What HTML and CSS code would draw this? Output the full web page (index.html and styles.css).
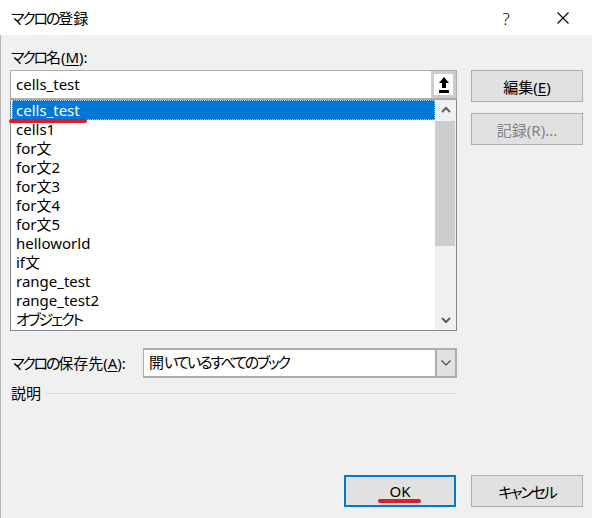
FILE: index.html
```html
<!DOCTYPE html>
<html lang="ja">
<head>
<meta charset="utf-8">
<title>マクロの登録</title>
<link rel="stylesheet" href="styles.css">
</head>
<body>
<div class="window">
  <div class="titlebar">
    <div class="title"><span class="kana">マクロの</span>登録</div>
    <div class="cap-btn help">?</div>
    <div class="cap-btn close">
      <svg width="12" height="12" viewBox="0 0 12 12"><path d="M0.5 0.5 L11.5 11.5 M11.5 0.5 L0.5 11.5" stroke="#000" stroke-width="1.1" fill="none"/></svg>
    </div>
  </div>
  <div class="content">
    <div class="main">
      <div class="left">
        <div class="field-label"><span class="kana">マクロ</span>名(<u>M</u>):</div>
        <div class="name-input">
          <span class="input-text">cells_test</span>
          <span class="ref-btn">
            <svg width="10" height="16" viewBox="0 0 10 16"><path d="M5 0 L10 6 H7 V11 H3 V6 H0 Z" fill="#000"/><rect x="0" y="13" width="10" height="3" fill="#000"/></svg>
          </span>
        </div>
        <div class="list">
          <div class="items">
            <div class="row selected">cells_test</div>
            <div class="row">cells1</div>
            <div class="row">for文</div>
            <div class="row">for文2</div>
            <div class="row">for文3</div>
            <div class="row">for文4</div>
            <div class="row">for文5</div>
            <div class="row">helloworld</div>
            <div class="row">if文</div>
            <div class="row">range_test</div>
            <div class="row">range_test2</div>
            <div class="row"><span class="kana">オブジェクト</span></div>
          </div>
          <div class="scrollbar">
            <div class="sb-btn sb-up"><svg width="10" height="7" viewBox="0 0 10 7"><polyline points="1,6 5,2 9,6" stroke="#606060" stroke-width="2" fill="none"/></svg></div>
            <div class="sb-thumb"></div>
            <div class="sb-track"></div>
            <div class="sb-btn sb-down"><svg width="10" height="7" viewBox="0 0 10 7"><polyline points="1,1 5,5 9,1" stroke="#606060" stroke-width="2" fill="none"/></svg></div>
          </div>
          <div class="mark mark-list"></div>
        </div>
        <div class="save-row">
          <div class="save-label"><span class="kana">マクロの</span>保存先(<u>A</u>):</div>
          <div class="combo">
            <span class="combo-text">開<span class="kana">いているすべてのブック</span></span>
            <span class="combo-btn"><svg width="10" height="6" viewBox="0 0 10 6"><polyline points="0.5,0.5 5,5 9.5,0.5" stroke="#404040" stroke-width="1.1" fill="none"/></svg></span>
          </div>
        </div>
        <div class="desc-row">
          <span class="desc-label">説明</span>
          <span class="desc-line"></span>
        </div>
      </div>
      <div class="right">
        <button class="btn edit">編集(<u>E</u>)</button>
        <button class="btn record" disabled>記録(R)...</button>
      </div>
    </div>
    <div class="footer">
      <button class="btn ok">OK<span class="mark mark-ok"></span></button>
      <button class="btn"><span class="kana">キャンセル</span></button>
    </div>
  </div>
</div>
</body>
</html>
```
FILE: styles.css
```css
* { box-sizing: border-box; }
html, body { margin: 0; padding: 0; }
body {
  width: 592px;
  height: 518px;
  overflow: hidden;
  font-family: "Noto Sans", "Noto Sans CJK JP", sans-serif;
  font-feature-settings: "palt";
  font-size: 15px;
  font-weight: 400;
  color: #000;
  background: #f0f0f0;
}
u { text-decoration: underline; text-underline-offset: 2px; text-decoration-thickness: 1px; }
.kana { letter-spacing: -2.2px; }

.window { width: 592px; height: 518px; display: flex; flex-direction: column; }

.titlebar {
  height: 35px;
  background: #fff;
  display: flex;
  align-items: center;
  padding-left: 11px;
  padding-right: 6px;
}
.title { flex: 1; font-size: 15px; line-height: 20px; }
.cap-btn { width: 46px; height: 35px; display: flex; align-items: center; justify-content: center; }
.help { font-size: 17px; font-weight: 300; margin-right: 11px; padding-top: 1px; }
.close { padding-top: 1px; }

.content {
  height: 483px;
  background: #f0f0f0;
  border-left: 1px solid #b4b4b4;
  padding: 12px 9px 11px 9px;
  display: flex;
  flex-direction: column;
}
.main {
  display: grid;
  grid-template-columns: 447px 112px;
  column-gap: 14px;
}
.left { display: flex; flex-direction: column; }
.field-label { height: 20px; line-height: 20px; margin-bottom: 3px; padding-left: 1px; }

.name-input {
  height: 29px;
  border: 1px solid #adadad;
  background: #fff;
  display: flex;
  align-items: stretch;
}
.input-text { flex: 1; padding-left: 5px; line-height: 26px; }
.ref-btn {
  width: 25px;
  background: #fff;
  border: 3px solid #cccccc;
  display: flex;
  align-items: center;
  justify-content: center;
}

.list {
  position: relative;
  height: 232px;
  border: 1px solid #828790;
  border-top-color: #adadad;
  background: #fff;
  display: flex;
}
.items { flex: 1; padding: 0 0 0 1px; }
.row { height: 19px; line-height: 19px; padding-left: 4px; white-space: nowrap; }
.row.selected {
  height: 20px;
  line-height: 20px;
  background: #0078d7;
  color: #fff;
  outline: 1px dotted #9fcdf2;
  outline-offset: -1px;
}
.scrollbar { width: 21px; background: #f0f0f0; display: flex; flex-direction: column; }
.sb-btn { height: 21px; display: flex; align-items: center; justify-content: center; }
.sb-up { padding-bottom: 2px; }
.sb-down { height: 20px; padding-top: 0; }
.sb-thumb { height: 125px; background: #cdcdcd; margin: 0 1px 0 0; }
.sb-track { flex: 1; }

.mark { position: absolute; background: #e31b23; border-radius: 2px; height: 4px; }
.mark-list { left: -2px; top: 19px; width: 78px; }

.save-row { margin-top: 17px; display: flex; align-items: center; }
.save-label { width: 133px; padding-left: 1px; line-height: 20px; }
.combo {
  width: 314px;
  height: 30px;
  border: 1px solid #adadad;
  border-top-width: 2px;
  border-bottom-width: 2px;
  background: #fff;
  display: flex;
  align-items: stretch;
}
.combo-text { flex: 1; padding-left: 5px; line-height: 25px; }
.combo-btn {
  width: 21px;
  background: #e1e1e1;
  border-left: 2px solid #adadad;
  border-right: 1px solid #adadad;
  display: flex;
  align-items: center;
  justify-content: center;
}

.desc-row { margin-top: 5px; display: flex; align-items: center; height: 20px; }
.desc-label { padding-left: 1px; line-height: 20px; }
.desc-line { flex: 1; height: 1px; background: #d9d9d9; margin-left: 5px; margin-top: 1px; }

.right { display: flex; flex-direction: column; padding-top: 23px; gap: 11px; }
.btn {
  width: 112px;
  height: 32px;
  background: #e1e1e1;
  border: 1px solid #adadad;
  font-family: inherit;
  font-feature-settings: "palt";
  font-size: 15px;
  font-weight: 400;
  color: #000;
  padding: 0;
  margin: 0;
  position: relative;
}
.btn.record { color: #838383; }
.btn.ok { border: 2px solid #0078d7; }
.mark-ok { left: 32px; top: 22px; width: 43px; }

.footer { margin-top: auto; display: flex; justify-content: flex-end; gap: 15px; }
```
